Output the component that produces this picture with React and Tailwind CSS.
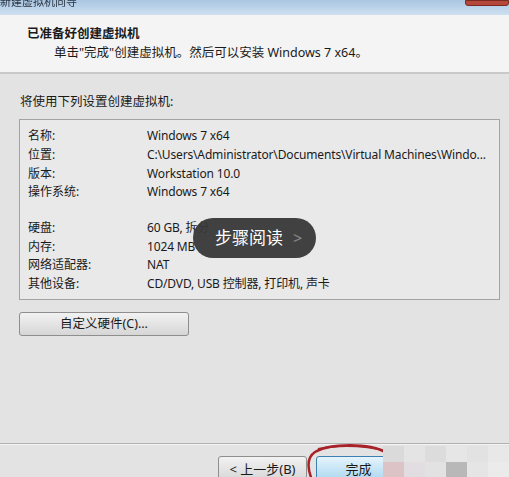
import React from "react";

const rows1 = [
  ["名称:", "Windows 7 x64"],
  ["位置:", "C:\\Users\\Administrator\\Documents\\Virtual Machines\\Windo..."],
  ["版本:", "Workstation 10.0"],
  ["操作系统:", "Windows 7 x64"],
];
const rows2 = [
  ["硬盘:", "60 GB, 拆分"],
  ["内存:", "1024 MB"],
  ["网络适配器:", "NAT"],
  ["其他设备:", "CD/DVD, USB 控制器, 打印机, 声卡"],
];

function Row({ label, value }) {
  return (
    <div className="flex h-[18.7px] items-center">
      <div className="w-[119px] shrink-0">{label}</div>
      <div className="whitespace-nowrap tracking-[-0.15px]">{value}</div>
    </div>
  );
}

export default function App() {
  return (
    <div
      className="relative w-[509px] h-[477px] overflow-hidden bg-[#e3e3e3] text-[12px] text-[#1a1a1a]"
      style={{ fontFamily: '"Noto Sans", "Noto Sans CJK SC", sans-serif' }}
    >
      {/* title bar */}
      <div className="flex h-[15px] items-start justify-between bg-gradient-to-b from-[#a9c6e2] to-[#cfe0f0] overflow-hidden">
        <div className="-mt-[5px] text-[11px] leading-[14px] text-[#2a3440] blur-[0.5px]">新建虚拟机向导</div>
        <div className="h-[6px] w-[44px] rounded-b-[3px] bg-[#b5473a] border border-[#7a2a20]"></div>
      </div>
      {/* header */}
      <div className="h-[59px] bg-[#f4f4f4] border-b-2 border-[#c9c9c9] pl-[27px] pt-[10px]">
        <div className="font-bold leading-[17px] text-[12.5px]">已准备好创建虚拟机</div>
        <div className="pl-[27px] mt-[2px] leading-[17px] text-[12.5px]">
          单击"完成"创建虚拟机。然后可以安装 Windows 7 x64。
        </div>
      </div>
      {/* body */}
      <div className="px-[19px] pt-[19px]">
        <div className="pl-[1px] leading-[17px] text-[12.5px]">将使用下列设置创建虚拟机:</div>
        <div className="mt-[9px] w-[481px] h-[181px] border border-[#a3a3a3] bg-[#e9e9e9] pl-[8px] pt-[7px]">
          {rows1.map(([l, v]) => (
            <Row key={l} label={l} value={v} />
          ))}
          <div className="h-[17px]"></div>
          {rows2.map(([l, v]) => (
            <Row key={l} label={l} value={v} />
          ))}
        </div>
        <button className="mt-[12px] w-[170px] h-[24px] rounded-[3px] border border-[#8e8e8e] bg-gradient-to-b from-[#f2f2f2] to-[#d6d6d6] text-[12.5px] leading-none">
          自定义硬件(C)...
        </button>
      </div>
      {/* bottom separator */}
      <div className="absolute left-0 right-0 top-[443px] border-t border-[#b0b0b0] border-b border-b-[#f4f4f4]"></div>
      <div className="absolute left-[218px] top-[456px] flex gap-[9px]">
        <button className="w-[89px] h-[26px] rounded-[3px] border border-[#8e8e8e] bg-gradient-to-b from-[#f2f2f2] to-[#d6d6d6] text-[13px] leading-none">
          &lt; 上一步(B)
        </button>
        <button className="w-[85px] h-[26px] rounded-[3px] border border-[#3c7fb1] bg-gradient-to-b from-[#e5f4fc] to-[#a9d6ef] text-[13px] leading-none">
          完成
        </button>
      </div>
      {/* red circle annotation */}
      <svg className="absolute left-[300px] top-[440px]" width="110" height="40" viewBox="0 0 110 40">
        <path d="M 85 12 C 70 3, 30 3, 15 12 C 6 18, 8 30, 12 40" fill="none" stroke="#a8222a" strokeWidth="2.5" />
        <path d="M 18 9 C 40 4, 75 5, 92 14" fill="none" stroke="#a8222a" strokeWidth="2" />
      </svg>
      {/* mosaic watermark */}
      <div className="absolute left-[383px] top-[446px] w-[126px] h-[31px] grid grid-cols-6 grid-rows-2">
        <div className="bg-[#dadada]"></div>
        <div className="bg-[#e4e4e4]"></div>
        <div className="bg-[#dcdcdc]"></div>
        <div className="bg-[#e6e6e6]"></div>
        <div className="bg-[#e2e2e2]"></div>
        <div className="bg-[#e8e8e8]"></div>
        <div className="bg-[#dcc3c6]"></div>
        <div className="bg-[#e1dde0]"></div>
        <div className="bg-[#e2e2e2]"></div>
        <div className="bg-[#b8b8b8]"></div>
        <div className="bg-[#e5e5e5]"></div>
        <div className="bg-[#ebebeb]"></div>
      </div>
      {/* overlay pill */}
      <div className="absolute left-[193px] top-[218px] w-[123px] h-[40px] rounded-full bg-[#383838]/95 flex items-center pl-[22px] text-white text-[17px]">
        步骤阅读
        <span className="ml-[10px] text-[#888] text-[16px]">&gt;</span>
      </div>
    </div>
  );
}
